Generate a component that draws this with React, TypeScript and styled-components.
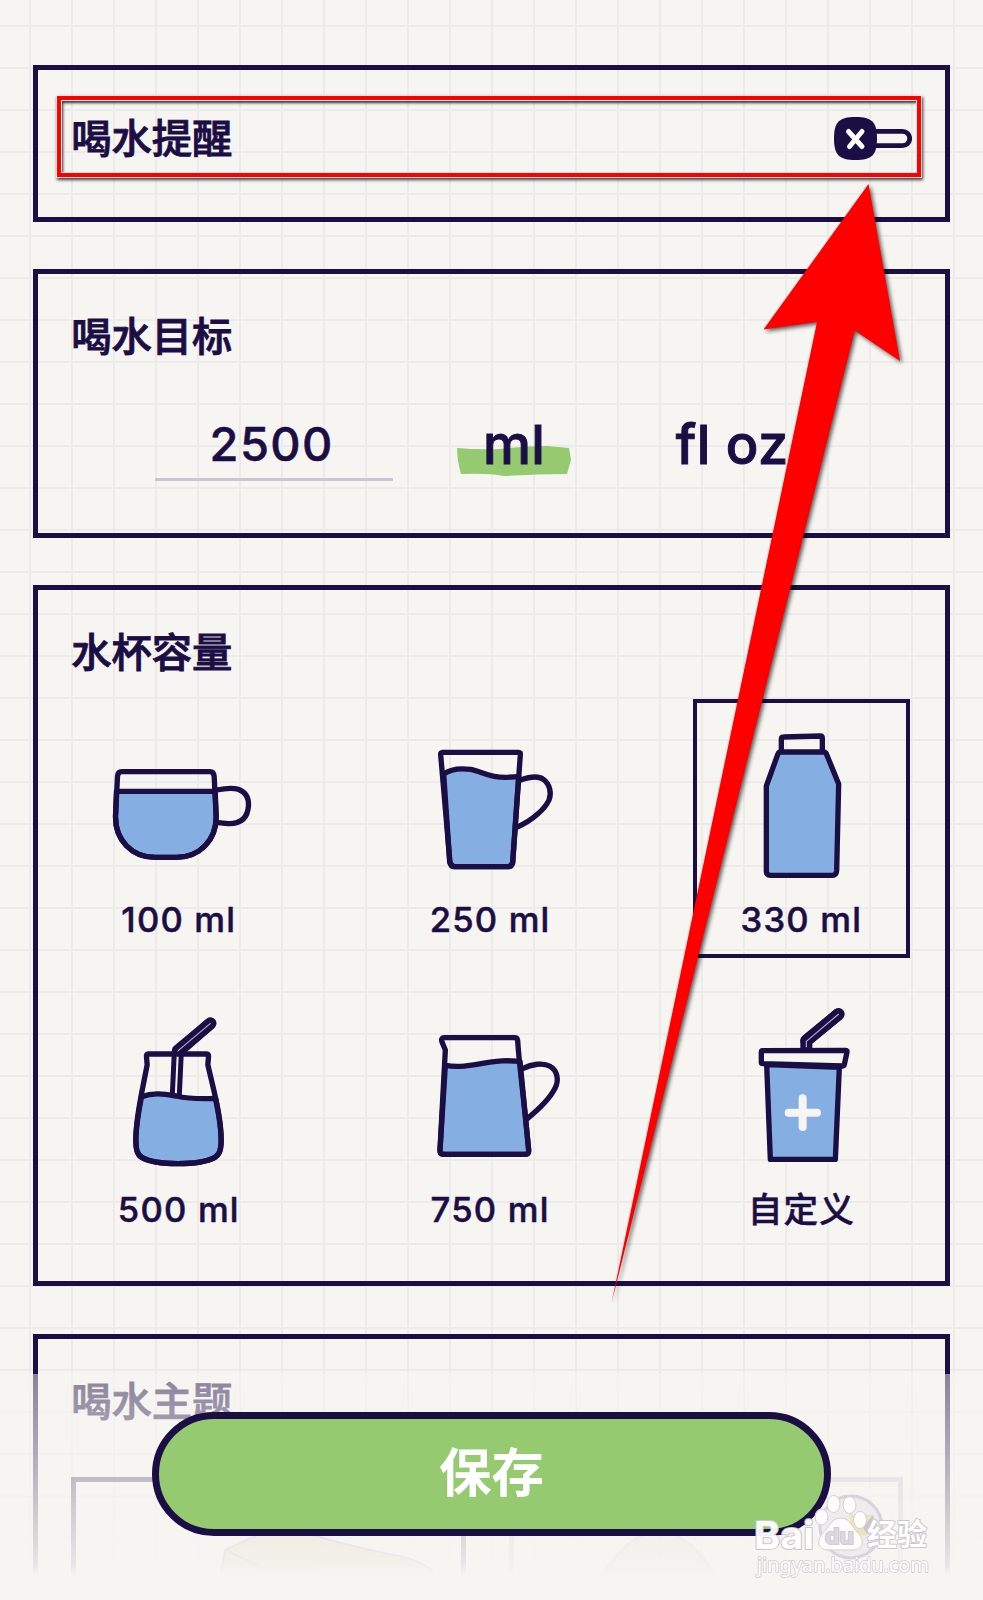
import React from "react";
import styled, { createGlobalStyle, css } from "styled-components";

const ink = "#1b0e45";
const paper = "#f6f5f1";
const water = "#85aee3";
const leaf = "#95ca70";
const cjk = `"Inter", "Noto Sans CJK SC", sans-serif`;

const GlobalStyle = createGlobalStyle`
  * { box-sizing: border-box; }
  body { margin: 0; background: ${paper}; }
`;

const Page = styled.main`
  position: relative;
  width: 983px;
  height: 1600px;
  overflow: hidden;
  padding: 65px 33px 0;
  display: flex;
  flex-direction: column;
  color: ${ink};
  font-family: ${cjk};
  background-color: ${paper};
  background-image: linear-gradient(90deg, #ecebe9 2px, transparent 2px),
    linear-gradient(#ecebe9 2px, transparent 2px);
  background-size: 42px 42px;
  background-position: 29px 25px;
`;

const Card = styled.section<{ $height: number; $gap?: number }>`
  flex: none;
  width: 917px;
  height: ${(p) => p.$height}px;
  margin-bottom: ${(p) => p.$gap ?? 47.6}px;
  border: 5px solid ${ink};
  padding: 40px 35.6px 0 33.2px;
`;

const Heading = styled.h2`
  margin: 0;
  font-size: 40.3px;
  line-height: 46px;
  font-weight: 500;
  -webkit-text-stroke: 0.9px ${ink};
`;

const ReminderRow = styled.div`
  display: flex;
  align-items: center;
  justify-content: space-between;
  height: 58px;
`;

const ToggleSvg = styled.svg`
  width: 80px;
  height: 46px;
  margin: 1px -3px 0 0;
`;

const GoalRow = styled.div`
  display: flex;
  margin-top: 45px;
  padding-left: 84px;
`;

const Amount = styled.div`
  width: 238px;
  height: 76px;
  padding: 0 9px 0 4px;
  border-bottom: 3px solid #c9c7d1;
  text-align: center;
  font-size: 47px;
  line-height: 77px;
  font-weight: 500;
  letter-spacing: 1.4px;
  -webkit-text-stroke: 0.5px ${ink};
`;

const Unit = styled.button<{ $width: number; $left: number }>`
  position: relative;
  width: ${(p) => p.$width}px;
  height: 76px;
  margin: 0 0 0 ${(p) => p.$left}px;
  padding: 0;
  border: 0;
  background: none;
  color: ${ink};
  font: 500 54px/79px ${cjk};
  letter-spacing: 0.5px;
  text-align: center;
  white-space: nowrap;
  -webkit-text-stroke: 1px ${ink};
`;

const UnitLabel = styled.span`
  position: relative;
`;

const Brush = styled.svg`
  position: absolute;
  left: 0;
  top: 41px;
  width: 114px;
  height: 30px;
`;

const CupGrid = styled.div`
  display: grid;
  grid-template-columns: repeat(3, 216.4px);
  justify-content: space-between;
  row-gap: 31px;
  margin: 23px 0 0 -0.6px;
  width: 839px;
`;

const Cup = styled.button<{ $selected?: boolean }>`
  display: flex;
  flex-direction: column;
  align-items: center;
  height: 259px;
  padding: 0;
  border: 4px solid transparent;
  background: none;
  color: ${ink};
  ${(p) =>
    p.$selected &&
    css`
      border-color: ${ink};
    `}
`;

const CupArt = styled.svg`
  width: 208px;
  height: 190px;
  overflow: visible;
  fill: none;
  stroke: ${ink};
  stroke-width: 16px;
  stroke-linejoin: round;
  stroke-linecap: round;
`;

const CupLabel = styled.span`
  font: 500 34.6px/52px ${cjk};
  letter-spacing: 1.2px;
  white-space: nowrap;
  -webkit-text-stroke: 0.5px ${ink};
`;

const ThemeRow = styled.div`
  display: flex;
  gap: 43px;
  margin-top: 52px;
`;

const ThemeTile = styled.div<{ $dim?: boolean }>`
  flex: none;
  width: 394.5px;
  height: 220px;
  border: 5px solid ${ink};
  opacity: ${(p) => (p.$dim ? 0.26 : 0.92)};
`;

const ThemeArt = styled.svg`
  display: block;
  width: 385px;
  height: 110px;
  overflow: visible;
`;

const Footer = styled.footer`
  position: absolute;
  left: 0;
  right: 0;
  top: 1374px;
  height: 226px;
  display: flex;
  justify-content: center;
  padding-top: 38px;
  background: linear-gradient(
    rgba(246, 245, 241, 0.5),
    rgba(246, 245, 241, 0.93) 190px,
    ${paper} 202px
  );
`;

const SaveButton = styled.button`
  width: 679px;
  height: 124px;
  border: 7px solid ${ink};
  border-radius: 62px;
  background: ${leaf};
  color: #fff;
  padding: 0 0 4px;
  font: 700 52.5px/109px ${cjk};
`;

const Highlight = styled.div`
  position: absolute;
  left: 57px;
  top: 96px;
  width: 864px;
  height: 81px;
  border: 4px solid #fe0000;
  outline: 1px solid rgba(255, 240, 235, 0.8);
  box-shadow: 1px 2px 3px 1px rgba(0, 0, 0, 0.75), inset 0 0 0 1px #f4e9e6,
    inset 2px 3px 3px 0 rgba(0, 0, 0, 0.8);
`;

const Pointer = styled.svg`
  position: absolute;
  left: 0;
  top: 0;
  width: 983px;
  height: 1600px;
  pointer-events: none;
  filter: drop-shadow(2px 2px 2px rgba(0, 0, 0, 0.65));
`;

const Watermark = styled.svg`
  position: absolute;
  left: 745px;
  top: 1485px;
  width: 200px;
  height: 105px;
`;

const Teacup = () => (
  <>
    <path
      d="M170 274H466L469 350C469 420 420 472 350 472H285C215 472 167 420 167 350Z"
      fill={water}
    />
    <path d="M186 215H450Q462 215 463 229L469 350C469 420 420 472 350 472H285C215 472 167 420 167 350L173 229Q174 215 186 215Z" />
    <path d="M470 270C500 264 523 264 535 268C556 276 567 292 566 316C564 350 547 372 505 371L475 368" />
  </>
);

const Mug = () => (
  <>
    <path
      d="M131 222C150 208 180 204 212 208C245 214 270 234 320 232L356 230L338 490L328 500H160L149 487Z"
      fill={water}
    />
    <path d="M128 157H356Q362 157 361 164L338 486Q337 500 324 500H164Q151 500 150 487L122 164Q121 157 128 157Z" />
    <path d="M362 240C390 230 415 227 430 238C450 252 455 280 447 300C436 325 400 360 350 382" />
  </>
);

const Bottle = () => (
  <>
    <path d="M304 180V148Q304 141 311 141L420 138Q427 138 427 145V180" />
    <path
      d="M302 186H430Q436 186 439 191L476 282L470 542Q469 556 457 556H271Q259 556 259 544V288L293 194Q296 186 302 186Z"
      fill={water}
    />
  </>
);

const Jar = () => (
  <>
    <path d="M259 284L265 155L363 70" strokeWidth="36" strokeLinecap="butt" />
    <path d="M265 152L363 70" strokeWidth="36" />
    <path d="M259 284L265 156" stroke={paper} strokeWidth="6" />
    <path d="M266 152L362 71" stroke="#b7b2c4" strokeWidth="3.5" />
    <path
      d="M156 290C190 277 220 281 260 288C300 297 340 297 378 295C387 340 396 380 395 425C394 455 388 465 375 473C330 497 200 497 158 473C142 464 139 448 139 415C140 375 148 330 156 290Z"
      fill={water}
    />
    <path d="M176 162H352Q358 162 357 170L355 194C370 262 396 350 395 425C394 455 388 465 375 473C330 497 200 497 158 473C142 464 139 448 139 415C140 345 155 290 173 194L171 170Q170 162 176 162Z" />
  </>
);

const Pitcher = () => (
  <>
    <path
      d="M136 196C200 208 260 182 320 182L360 184L386 450Q387 463 376 463H130Q119 463 120 450Z"
      fill={water}
    />
    <path d="M132 113H343Q352 113 353 122C358 200 368 260 386 450Q387 463 376 463H132Q120 463 120 450L136 150L126 126Q122 114 132 113Z" />
    <path d="M368 206C395 192 430 187 450 199C472 212 478 240 465 265C450 295 420 325 382 356" />
  </>
);

const Tumbler = () => (
  <>
    <path d="M319 176V152L416 72" strokeWidth="36" strokeLinecap="butt" />
    <path d="M319 152L416 72" strokeWidth="36" />
    <path d="M319 172V154L416 72" stroke="#b7b2c4" strokeWidth="3.5" strokeLinecap="butt" />
    <path d="M200 224L418 232L406 508H211Z" fill={water} />
    <path d="M188 182L438 181Q442 181 441 186L433 224Q432 228 426 228L188 221Q184 221 184 217V187Q184 182 188 182Z" fill={paper} />
    <path d="M308 325V411M266 368H351" stroke={paper} strokeWidth="24" />
  </>
);

const cups = [
  { label: "100 ml", box: "45.5 9 624 570", Art: Teacup },
  { label: "250 ml", box: "-42 9 624 570", Art: Mug },
  { label: "330 ml", box: "51 39 624 570", Art: Bottle, selected: true },
  { label: "500 ml", box: "-43.5 -21 624 570", Art: Jar },
  { label: "750 ml", box: "-42 -21 624 570", Art: Pitcher },
  { label: "自定义", box: "-9 9 624 570", Art: Tumbler },
];

export default function App() {
  return (
    <>
      <GlobalStyle />
      <Page>
        <Card $height={156.7} $gap={47.3}>
          <ReminderRow>
            <Heading>喝水提醒</Heading>
            <ToggleSvg viewBox="0 0 80 46">
              <rect x="30" y="14.3" width="47.7" height="14.4" rx="7.2" fill={paper} stroke={ink} strokeWidth="4.8" />
              <path
                d="M23.5 0C40 0 45 5 45 21.5S40 43 23.5 43S2 38 2 21.5S7 0 23.5 0Z"
                fill={ink}
              />
              <path d="M16.5 14.5L30 29.5M30 14.5L17.5 29.5" stroke="#fff" strokeWidth="5" strokeLinecap="round" />
            </ToggleSvg>
          </ReminderRow>
        </Card>

        <Card $height={268.7}>
          <Heading>喝水目标</Heading>
          <GoalRow>
            <Amount>2500</Amount>
            <Unit $width={114} $left={64}>
              <Brush viewBox="0 0 114 30">
                <path d="M0 2Q22 4 43 3Q68 0 90 0L112 2L114 14L110 28Q78 28 47 30Q32 27 4 28Q0 14 0 2Z" fill={leaf} />
              </Brush>
              <UnitLabel>ml</UnitLabel>
            </Unit>
            <Unit $width={114} $left={104}>
              <UnitLabel>fl oz</UnitLabel>
            </Unit>
          </GoalRow>
        </Card>

        <Card $height={701}>
          <Heading>水杯容量</Heading>
          <CupGrid>
            {cups.map(({ label, box, Art, selected }) => (
              <Cup key={label} $selected={selected}>
                <CupArt viewBox={box}>
                  <Art />
                </CupArt>
                <CupLabel>{label}</CupLabel>
              </Cup>
            ))}
          </CupGrid>
        </Card>

        <Card $height={400}>
          <Heading>喝水主题</Heading>
          <ThemeRow>
            <ThemeTile>
              <ThemeArt viewBox="0 0 385 110" stroke="#7a70b8" strokeWidth="2">
                <path d="M143 104L149 68L188 50Q215 48 240 54Q280 66 328 75Q345 80 356 88V104Z" fill="#d2b48a" />
                <path d="M149 68L190 87" fill="none" />
                <path d="M180 88L197 78L202 85L235 83L254 92L220 94Z" fill="#a59a94" stroke="none" />
              </ThemeArt>
            </ThemeTile>
            <ThemeTile $dim>
              <ThemeArt viewBox="0 0 385 110">
                <path d="M88 94Q145 5 202 94Z" fill="#69738c" stroke={ink} strokeWidth="3" />
              </ThemeArt>
            </ThemeTile>
          </ThemeRow>
        </Card>

        <Footer>
          <SaveButton>保存</SaveButton>
        </Footer>

        <Highlight />

        <Pointer viewBox="0 0 983 1600">
          <path d="M868.5 184L900 361L854.7 330.5L611.5 1303L817 322L763.5 329.5Z" fill="#fe0000" />
        </Pointer>

        <Watermark viewBox="0 0 200 105">
          <circle cx="106" cy="42" r="31" fill="#e5e2e9" fillOpacity=".45" stroke="#cfccd8" strokeOpacity=".8" strokeWidth="3" />
          <path d="M104 29L128 30L121 51L106 47Z" fill="#efe3ba" />
          <path d="M128 30L130 38L122 49L118 42Z" fill="#c9c4cf" />
          <g fill="#fff" fillOpacity=".9" stroke="#d2d0d2" strokeWidth="1">
            <ellipse cx="76.5" cy="32" rx="6.5" ry="8" />
            <ellipse cx="88.5" cy="19" rx="6.5" ry="8.5" />
            <ellipse cx="104.5" cy="20" rx="6.5" ry="8.5" />
            <ellipse cx="115" cy="35" rx="6.5" ry="8.5" />
            <path d="M95.5 33C105 33 107 42 112 47C121 56 118 65 107 65H84C73 65 70 56 79 47C84 42 87 33 95.5 33Z" />
          </g>
          <g fontFamily="Inter, sans-serif" fontWeight="700" fill="#fff" stroke="#cbc9cc" strokeWidth="2" paintOrder="stroke" strokeLinejoin="round">
            <text x="9" y="64" fontSize="38" textLength="60" lengthAdjust="spacingAndGlyphs" fillOpacity=".95">Bai</text>
            <text x="80" y="59" fontSize="22" textLength="29" lengthAdjust="spacingAndGlyphs" fill="#dcdae0">du</text>
            <text x="122" y="60" fontSize="30" fontFamily="'Noto Sans CJK SC', sans-serif" textLength="60">经验</text>
            <text x="12" y="87" fontSize="20" fontWeight="400" fontFamily="'Noto Sans', sans-serif" textLength="172" strokeWidth="1.5">jingyan.baidu.com</text>
          </g>
        </Watermark>
      </Page>
    </>
  );
}
